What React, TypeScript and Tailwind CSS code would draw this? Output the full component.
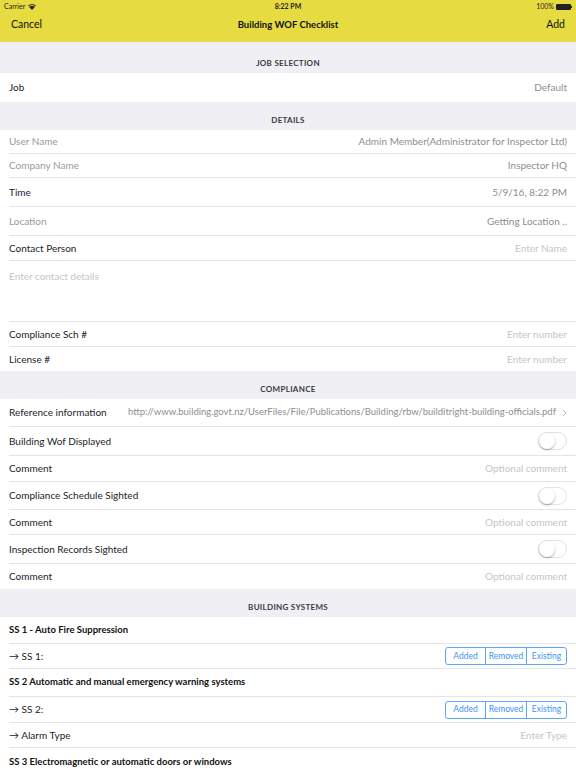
import React from "react";

const font = { fontFamily: "Lato, 'Noto Sans', sans-serif" };

function Header({ title, h }: { title: string; h: string }) {
  return (
    <div className={`flex items-end justify-center bg-[#efeff4] ${h} pb-[4px]`}>
      <span className="text-[8px] font-bold tracking-[0.3px] text-[#3a3a3f]">{title}</span>
    </div>
  );
}

function Row({
  label,
  value,
  h,
  labelGray,
  valueLight,
  last,
  children,
  bold,
}: {
  label: string;
  value?: string;
  h: string;
  labelGray?: boolean;
  valueLight?: boolean;
  last?: boolean;
  children?: React.ReactNode;
  bold?: boolean;
}) {
  return (
    <div className="bg-white pl-[9px]">
      <div className={`flex items-center justify-between pr-[9px] ${h} ${last ? "" : "border-b border-[#e4e4e8]"}`}>
        <span
          className={`${bold ? "text-[9.5px] font-bold text-[#111]" : "text-[10px]"} ${
            labelGray ? "text-[#9a9a9f]" : bold ? "" : "text-[#1d1d1f]"
          }`}
        >
          {label}
        </span>
        {value && (
          <span className={`text-[10px] ${valueLight ? "text-[#c5c5ca]" : "text-[#8e8e93]"}`}>{value}</span>
        )}
        {children}
      </div>
    </div>
  );
}

function Toggle() {
  return (
    <div className="h-[18px] w-[29px] rounded-full border border-[#e2e2e6] bg-white relative">
      <div className="absolute left-0 top-0 h-[16px] w-[16px] rounded-full bg-white shadow-[0_1px_2px_rgba(0,0,0,0.35)]" />
    </div>
  );
}

function Segmented() {
  return (
    <div className="flex h-[18px] rounded-[3px] border border-[#5aa6ff] text-[8.5px] text-[#3b94f5]">
      <div className="flex w-[40px] items-center justify-center border-r border-[#5aa6ff]">Added</div>
      <div className="flex w-[41px] items-center justify-center border-r border-[#5aa6ff]">Removed</div>
      <div className="flex w-[39px] items-center justify-center">Existing</div>
    </div>
  );
}

export default function App() {
  return (
    <div className="w-[576px] h-[768px] overflow-hidden bg-[#efeff4]" style={font}>
      {/* Nav */}
      <div className="bg-[#e6dc42] h-[42px] flex flex-col">
        <div className="flex h-[13px] items-center justify-between px-[4px] text-[7px] text-[#222]">
          <div className="flex items-center gap-[3px] w-[80px]">
            <span>Carrier</span>
            <svg width="8" height="6" viewBox="0 0 8 6">
              <path d="M4 6 L1.2 3 A4 4 0 0 1 6.8 3 Z" fill="#222" />
              <path d="M0 1.7 A5.8 5.8 0 0 1 8 1.7 L7.3 2.4 A4.8 4.8 0 0 0 0.7 2.4 Z" fill="#222" />
            </svg>
          </div>
          <span className="font-bold">8:22 PM</span>
          <div className="flex items-center justify-end gap-[2px] w-[80px]">
            <span>100%</span>
            <div className="flex items-center">
              <div className="h-[6px] w-[15px] bg-[#222] rounded-[1px]" />
              <div className="h-[2px] w-[1px] bg-[#222]" />
            </div>
          </div>
        </div>
        <div className="flex flex-1 items-center justify-between px-[11px] pb-[5px] text-[10.5px] text-[#111]">
          <span className="w-[80px]">Cancel</span>
          <span className="font-bold text-[9.5px]">Building WOF Checklist</span>
          <span className="w-[80px] text-right">Add</span>
        </div>
      </div>

      <Header title="JOB SELECTION" h="h-[31px]" />
      <Row label="Job" value="Default" h="h-[29px]" last />

      <Header title="DETAILS" h="h-[28px]" />
      <Row label="User Name" value="Admin Member(Administrator for Inspector Ltd)" h="h-[24px]" labelGray />
      <Row label="Company Name" value="Inspector HQ" h="h-[24px]" labelGray />
      <Row label="Time" value="5/9/16, 8:22 PM" h="h-[29px]" />
      <Row label="Location" value="Getting Location .." h="h-[29px]" labelGray />
      <Row label="Contact Person" value="Enter Name" h="h-[25px]" valueLight />
      <div className="bg-white pl-[9px]">
        <div className="h-[61px] border-b border-[#e4e4e8] pt-[8px] text-[10px] text-[#c5c5ca]">Enter contact details</div>
      </div>
      <Row label="Compliance Sch #" value="Enter number" h="h-[25px]" valueLight />
      <Row label="License #" value="Enter number" h="h-[24px]" valueLight last />

      <Header title="COMPLIANCE" h="h-[28px]" />
      <Row label="Reference information" h="h-[28px]">
        <div className="flex items-center gap-[6px] text-[9.5px] text-[#8e8e93]">
          <span className="whitespace-nowrap">
            http://www.building.govt.nz/UserFiles/File/Publications/Building/rbw/builditright-building-officials.pdf
          </span>
          <svg width="5" height="8" viewBox="0 0 5 8">
            <path d="M1 1 L4 4 L1 7" stroke="#b8b8bd" strokeWidth="1" fill="none" />
          </svg>
        </div>
      </Row>
      <Row label="Building Wof Displayed" h="h-[29px]">
        <Toggle />
      </Row>
      <Row label="Comment" value="Optional comment" h="h-[26px]" valueLight />
      <Row label="Compliance Schedule Sighted" h="h-[28px]">
        <Toggle />
      </Row>
      <Row label="Comment" value="Optional comment" h="h-[25px]" valueLight />
      <Row label="Inspection Records Sighted" h="h-[29px]">
        <Toggle />
      </Row>
      <Row label="Comment" value="Optional comment" h="h-[25px]" valueLight last />

      <Header title="BUILDING SYSTEMS" h="h-[28px]" />
      <Row label="SS 1 - Auto Fire Suppression" h="h-[27px]" bold />
      <Row label="→ SS 1:" h="h-[25px]">
        <Segmented />
      </Row>
      <Row label="SS 2 Automatic and manual emergency warning systems" h="h-[28px]" bold />
      <Row label="→ SS 2:" h="h-[26px]">
        <Segmented />
      </Row>
      <Row label="→ Alarm Type" value="Enter Type" h="h-[25px]" valueLight />
      <Row label="SS 3 Electromagnetic or automatic doors or windows" h="h-[28px]" bold last />
    </div>
  );
}
